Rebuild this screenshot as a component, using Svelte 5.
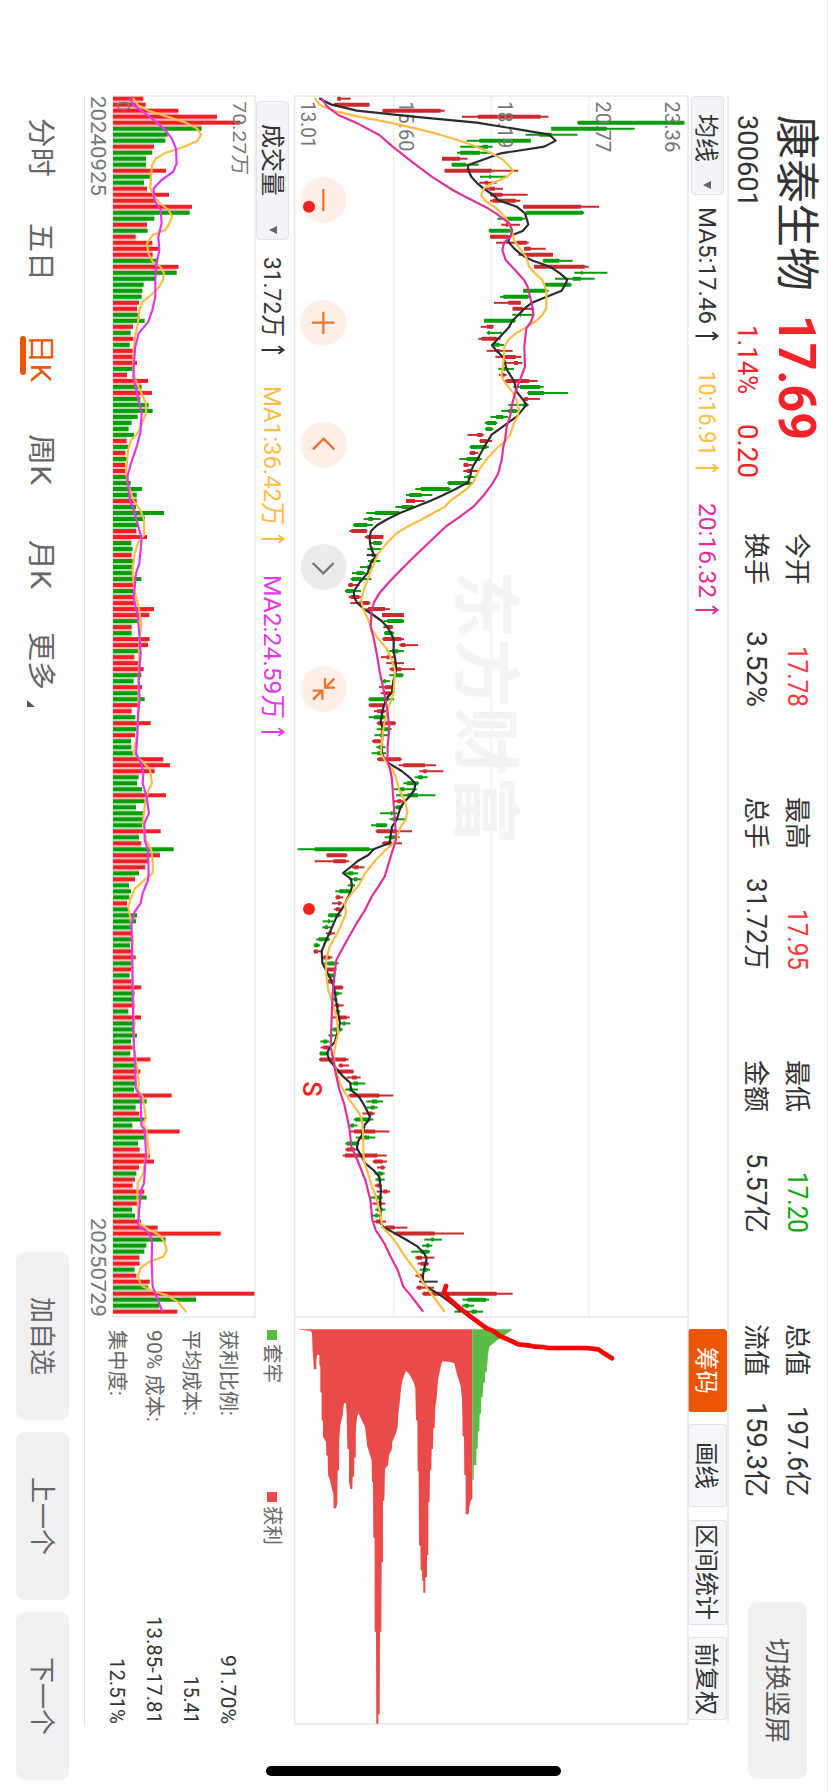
<script>
  // everything in the charts is drawn in thirds of a pixel, one day = STEP
  const FIRST = 56;
  const STEP = 18.015;

  // colour, low, body low, body high, high
  const candles = `
r142,142,153,182 r133,133,238,238 r278,278,452,464 r516,564,752,775 g862,864,1183,1183 g784,784,950,1034 g707,748,785,863 g530,568,722,722
g511,578,594,608 g501,510,570,600 r456,456,510,533 g484,486,528,566 r464,464,605,685 g570,597,602,650 r568,584,594,620 r580,598,615,639
r600,604,637,713 r600,608,677,691 r700,700,873,927 g708,708,878,882 g622,648,697,705 r634,648,655,690 g596,598,660,664 r600,600,655,660
r618,680,710,716 r702,702,722,767 r685,700,789,789 g758,760,808,848 r732,732,884,896 g853,873,877,952 g795,848,873,914 g763,763,842,845
g699,700,765,776 g630,640,715,718 r612,655,692,692 r668,668,698,732 g667,690,694,733 g582,582,675,677 r572,590,610,610 g590,594,600,636
r565,575,620,632 g605,609,628,642 r590,620,630,668 r616,640,677,694 r640,672,684,697 g625,640,646,672 r627,634,644,650 r640,648,718,743
g670,690,750,761 g712,714,762,834 r700,704,714,750 g655,700,712,716 g634,655,680,686 g601,618,640,655 g584,590,618,622 g585,588,606,610
r533,562,577,581 r568,570,590,606 g539,542,590,596 r538,540,556,565 g508,530,570,575 r521,521,535,548 r520,530,545,567 g522,532,540,555
g472,475,540,546 g376,392,478,482 g348,358,395,427 r348,348,375,404 g316,335,370,378 g229,255,328,330 g221,235,248,272 g189,192,232,248
r178,184,230,232 r224,230,280,280 g240,250,274,277 g232,244,250,274 k230,245,249,263 g234,242,252,271 g210,232,246,250 g186,200,222,227
g182,186,214,244 r174,176,188,208 g165,168,190,213 r176,182,208,214 r181,208,238,241 r230,234,285,300 r276,276,342,342 g281,292,340,342
r280,292,308,308 g282,284,308,312 r277,280,334,342 r328,332,346,384 g290,306,326,342 r273,290,298,311 r289,306,318,342 r298,304,334,375
g298,312,338,341 g276,280,288,300 r267,284,306,308 r272,284,302,306 g235,238,296,312 r236,238,280,285 r252,262,284,288 g236,252,284,288
r260,264,316,318 g260,276,296,305 g253,270,280,294 r246,250,272,274 g259,266,278,286 g245,262,275,288 r261,264,332,335 r326,340,405,438
r388,400,410,460 g374,385,398,413 g340,350,384,387 g312,330,344,380 g318,352,384,436 r309,322,334,344 g312,318,332,338 g270,302,308,322
g299,308,318,345 g243,258,290,292 r257,260,320,366 g284,298,314,329 r276,280,306,336 g23,74,238,250 r110,110,170,172 r74,130,168,178
r186,192,206,223 g165,175,190,204 g178,192,202,214 g173,182,190,195 g136,148,180,184 r136,138,150,160 r126,144,152,157 r132,138,150,158
g114,116,148,154 g98,114,120,130 g97,104,114,125 r108,116,125,135 g79,86,116,120 g71,73,85,90 r70,72,84,98 r96,100,120,127
g100,112,134,146 r108,110,138,140 g110,114,132,136 r108,114,130,136 r130,134,158,160 g132,138,146,156 g126,132,138,142 r130,138,148,161
g134,138,146,151 r128,150,170,179 g150,158,166,181 g122,130,154,158 g115,122,128,142 g91,100,112,118 r92,100,116,122 g88,90,108,118
r87,90,168,176 r145,148,158,177 r138,142,190,191 r170,186,200,212 g177,190,204,226 g166,178,188,204 r175,180,268,310 g229,246,262,279
g230,242,254,263 r217,236,248,254 g191,196,240,250 g175,182,192,202 r182,192,256,298 g198,214,238,256 g166,170,204,208 r166,170,194,203
r158,165,262,290 r248,252,278,291 r261,272,282,286 g254,262,278,284 g256,262,272,284 r254,260,270,275 r260,280,292,300 g238,258,270,278
r247,260,276,286 g256,262,278,286 g246,256,264,276 r252,258,272,288 r280,286,314,352 r310,316,434,522 g403,424,432,456 g396,408,418,427
g364,392,416,420 r376,380,396,433 r383,392,414,417 g389,400,412,420 r376,384,396,402 k387,397,400,443 r379,382,394,432 r396,400,620,668
g517,532,588,597 g516,524,536,552 g493,545,560,579`
    .trim().split(/\s+/).map((s, i) => {
      const [low, open, close, high] = s.slice(1).split(',').map(Number);
      return { c: s[0], x: FIRST + i * STEP, low, open, close, high };
    });

  const volumes = `
r432 r439 r537 r653 r723 g607 g505 g498 r464 g459 g440 g440 r500 g457 g434 r443 r509 r470 r578 g571 g465 r443 g445 r409 r459
r478 r460 g475 r537 g532 g467 g433 g429 g427 r419 r413 g418 g436 r401 g394 r402 g391 r407 r403 r413 g403 r383 r446 g427 r458
g423 g448 g460 g415 g397 g388 g404 r382 g388 r378 g384 r378 r379 g387 g394 g428 g412 r412 g410 g494 g437 g415 r411 r443 g396
g400 r397 g405 g402 g402 g426 r410 g404 r404 r404 r464 r450 g414 r397 g397 r451 r446 g416 r405 r423 r433 g426 g403 r428 g416
g436 r422 r397 g408 r454 g416 r407 g395 g396 g402 r492 r512 r466 g418 g413 g428 r500 g436 g410 g434 g434 g428 r484 g419 r426
g523 r482 r447 r438 g419 r407 g389 g395 g390 r383 g388 g413 g410 g396 r396 g395 g392 r401 r409 g400 r399 g391 r397 r426 g406
g400 r406 g387 r425 g408 g401 g413 g395 r400 g393 r453 g406 r423 r408 g412 g404 r517 g442 g409 r420 g438 g399 r541 g442 g416
r421 r452 r464 r419 g411 r407 r400 r435 g442 r416 g398 g407 r425 r475 r664 g499 g441 g435 r420 r421 g406 r411 r451 g447 r765
g590 g480 r534`
    .trim().split(/\s+/).map((s, i) => ({ c: s[0], x: FIRST + i * STEP, v: s.slice(1) - 341 }));

  const ma5 = '56,90 74,125 92,200 110,370 128,560 146,672 164,778 182,797 200,763 220,633 238,583 256,533 274,536 292,545 310,562 328,584 345,610 361,625 380,680 400,705 433,715 453,698 468,660 485,655 505,672 523,693 541,725 560,780 580,810 599,832 615,825 632,815 650,770 668,726 686,703 704,686 722,667 742,657 760,640 796,606 815,622 832,640 868,650 905,673 935,680 974,710 992,695 1010,680 1028,655 1046,630 1064,605 1100,583 1136,563 1154,552 1172,543 1190,541 1208,533 1227,497 1245,460 1263,420 1281,375 1299,330 1317,293 1335,262 1353,243 1371,239 1389,240 1407,244 1431,255 1450,242 1479,233 1506,210 1533,192 1551,192 1569,202 1587,222 1605,250 1623,275 1641,292 1660,303 1677,311 1713,311 1740,316 1767,319 1803,310 1837,306 1857,288 1890,278 1925,272 1945,278 1990,276 2020,276 2038,284 2050,297 2073,335 2095,362 2112,376 2130,373 2148,360 2166,343 2181,332 2220,320 2240,306 2289,299 2307,252 2325,235 2343,203 2361,182 2379,159 2397,183 2420,186 2440,180 2480,160 2510,140 2540,127 2577,110 2613,95 2649,97 2670,108 2703,125 2721,132 2760,138 2830,150 2860,142 2885,135 2902,120 2920,111 2940,118 2973,145 2990,160 3009,181 3030,183 3050,207 3080,225 3110,240 3120,236 3135,224 3165,216 3185,204 3205,201 3225,212 3250,226 3270,250 3290,268 3330,273 3370,270 3400,272 3430,272 3441,280 3460,315 3480,350 3500,383 3520,402 3535,410 3565,403 3585,399 3605,399 3620,408 3640,443 3655,465 3675,490 3693,510';
  const ma10 = '56,75 75,90 92,130 110,205 128,300 146,380 164,450 182,510 200,560 220,605 238,637 256,656 272,669 290,652 308,610 325,582 345,573 363,587 382,615 400,635 420,652 450,665 480,672 500,685 530,708 545,713 560,717 580,735 600,757 630,769 685,769 705,757 720,742 740,713 760,677 780,655 800,643 830,642 865,638 885,634 905,643 935,667 960,680 990,687 1010,682 1030,672 1060,662 1082,647 1110,615 1140,588 1170,567 1210,548 1227,530 1245,505 1263,480 1280,465 1299,430 1320,392 1340,352 1360,320 1390,290 1420,265 1450,252 1485,238 1530,222 1560,213 1590,221 1620,235 1650,246 1675,264 1710,293 1740,305 1770,315 1840,311 1870,300 1890,293 1930,283 1970,277 2020,273 2040,284 2070,308 2090,317 2130,328 2150,338 2170,347 2195,352 2220,347 2240,332 2270,322 2295,305 2307,290 2340,257 2380,225 2415,207 2440,185 2470,164 2500,168 2520,160 2560,142 2580,130 2600,119 2640,108 2680,108 2730,115 2760,124 2810,140 2860,145 2890,137 2930,131 2960,135 2980,140 3015,152 3050,172 3080,193 3100,208 3120,215 3150,219 3240,221 3280,234 3320,246 3350,258 3400,271 3440,276 3465,300 3490,320 3530,345 3560,368 3585,387 3605,398 3630,415 3660,438 3693,462';
  const ma20 = '56,95 80,112 105,145 128,198 165,268 200,308 250,372 290,425 330,488 355,535 380,585 400,618 430,658 450,666 470,662 488,642 510,637 540,647 570,675 600,702 620,713 650,720 680,727 705,730 725,723 745,709 800,703 860,705 900,690 930,678 970,667 1010,660 1040,650 1080,645 1100,640 1140,635 1180,625 1210,608 1245,582 1280,550 1310,510 1340,467 1380,425 1420,383 1460,342 1500,303 1540,268 1565,253 1590,245 1640,242 1670,250 1720,260 1780,270 1840,283 1890,292 1940,298 2000,293 2040,292 2080,303 2100,306 2160,310 2220,315 2280,318 2320,305 2350,296 2390,284 2420,265 2450,245 2490,225 2530,200 2570,177 2610,155 2640,139 2680,134 2740,128 2840,124 2900,122 2940,130 2980,137 3025,147 3070,162 3120,173 3150,179 3200,184 3240,202 3300,226 3360,241 3420,247 3450,257 3490,283 3530,302 3570,323 3620,340 3650,365 3693,398';

  const vma1 = '56,402 75,415 92,448 110,505 128,560 146,593 164,605 182,595 200,555 218,500 235,470 256,458 290,455 325,453 345,463 370,482 390,508 410,518 430,510 450,498 465,460 490,443 520,447 545,460 560,483 580,494 600,491 625,476 645,455 665,430 690,420 730,416 770,407 820,402 870,402 900,408 930,422 970,440 1000,440 1030,428 1060,415 1080,395 1110,386 1180,380 1220,388 1260,402 1295,425 1320,434 1365,434 1385,418 1420,406 1470,399 1530,405 1580,418 1630,426 1680,420 1800,418 1900,418 1970,412 2020,402 2045,430 2070,452 2110,458 2135,445 2180,436 2230,431 2280,440 2310,456 2350,461 2380,460 2400,435 2425,407 2458,393 2480,387 2520,394 2580,401 2650,398 2750,402 2850,404 2900,403 2960,413 3010,418 3030,415 3050,430 3115,440 3130,432 3155,442 3190,445 3220,449 3240,437 3280,432 3310,415 3350,414 3400,417 3430,420 3450,450 3465,480 3485,495 3510,502 3530,492 3545,450 3565,423 3590,416 3615,425 3630,450 3645,500 3665,535 3695,560';
  const vma2 = '56,392 75,402 95,430 125,470 150,497 175,517 205,530 250,532 275,522 300,487 325,463 360,465 390,484 430,487 470,477 510,480 560,470 600,468 650,468 690,459 725,447 760,418 800,408 850,404 890,402 940,413 1000,427 1060,423 1100,412 1150,395 1190,384 1230,388 1260,392 1295,405 1350,420 1375,427 1450,420 1480,410 1550,403 1575,408 1610,416 1720,424 1800,418 1860,421 1900,416 1970,414 2020,410 2050,425 2080,432 2110,430 2150,442 2200,449 2230,435 2280,436 2310,446 2380,448 2400,446 2440,430 2470,424 2495,406 2530,396 2650,399 2750,400 2880,403 2960,408 3025,409 3050,424 3135,426 3150,436 3220,440 3310,434 3330,425 3430,416 3440,420 3460,450 3485,458 3550,457 3620,460 3640,468 3692,488';

  // chip distribution: price level, length
  const chipsIn = '20,88 62,93 66,100 68,155 72,208 79,208 79,180 82,165 88,165 88,195 91,200 91,275 95,280 95,360 99,362 99,410 108,425 109,465 113,468 114,525 120,540 125,565 130,582 131,625 138,625 142,610 143,512 147,510 148,415 151,375 157,350 162,310 168,310 170,345 172,445 177,450 177,545 181,567 187,567 188,530 192,530 193,473 197,473 198,378 202,348 206,340 215,360 225,380 232,440 240,465 245,480 246,545 249,545 250,712 254,714 254,995 258,995 259,1271 265,1271 265,1243 269,1243 270,995 274,995 275,787 279,787 279,602 283,602 285,507 294,495 297,465 305,450 307,425 318,400 323,380 325,345 330,300 333,265 338,238 348,213 358,222 370,245 376,265 378,360 382,362 383,512 386,515 387,735 391,737 392,810 396,812 397,842 400,842 400,878 406,878 406,832 411,832 411,765 415,765 415,606 419,605 420,511 424,511 425,447 429,447 430,385 434,383 436,320 440,295 444,240 452,200 457,184 480,186 493,190 500,220 512,258 516,295 518,408 522,410 523,525 527,525 527,643 536,643 538,620 543,600 547,597 547,88';
  const chipsOut = '547,88 668,88 640,108 622,120 598,140 594,165 590,215 585,218 585,245 580,250 578,290 574,292 573,340 569,342 568,393 564,395 563,445 559,447 559,495 552,495 551,540 547,540';
  const pen = '468,618 463,635 475,655 510,685 545,712 590,745 608,752 630,768 660,781 685,793 715,796 735,800 760,801 775,804 890,804 925,808 942,820 966,835';

  const quotes = [
    ['今开', '17.78', 61, 'up', '换手', '3.52%', 76],
    ['最高', '17.95', 61, 'up', '总手', '31.72万', 92],
    ['最低', '17.20', 61, 'down', '金额', '5.57亿', 80],
    ['总值', '197.6亿', 91, '', '流值', '159.3亿', 95],
  ];
  const averages = [
    ['MA5:17.46', 117, 'dark'],
    ['10:16.91', 85, 'amber'],
    ['20:16.32', 95, 'pink'],
  ];
  const volAverages = [
    ['31.72万', 80, 'dark'],
    ['MA1:36.42万', 140, 'amber'],
    ['MA2:24.59万', 144, 'violet'],
  ];
  const tools = [
    ['筹码', 47, 'on'],
    ['画线', 47, ''],
    ['区间统计', 96, 'long'],
    ['前复权', 72, ''],
  ];
  const levels = [
    ['23.36', 48, 51],
    ['20.77', 256, 51],
    ['18.19', 549, 47],
    ['15.60', 846, 50],
    ['13.01', 1140, 47],
  ];
  const costs = [
    ['获利比例:', 86, '91.70%', 69],
    ['平均成本:', 86, '15.41', 48],
    ['90% 成本:', 92, '13.85-17.81', 108],
    ['集中度:', 66, '12.51%', 66],
  ];
  const tabs = [
    ['分时', 59],
    ['五日', 58],
    ['日K', 48],
    ['周K', 51],
    ['月K', 49],
    ['更多', 58],
  ];
</script>

{#snippet label(text, w, size, cls = '')}
  <svg class="label {cls}" width={w} height={size}>
    <text x="0" y={size * 0.86} font-size={size} textLength={w} lengthAdjust="spacingAndGlyphs">{text}</text>
  </svg>
{/snippet}

{#snippet arrow(cls)}
  <svg class="arrow {cls}" width="10" height="24" viewBox="0 0 10 24">
    <path d="M5 23.5V1.5M1.3 6.5L5 1.5L8.7 6.5" />
  </svg>
{/snippet}

{#snippet caret()}
  <svg class="caret" width="8" height="8" viewBox="0 0 8 8"><path d="M0 0H8L4 8Z" /></svg>
{/snippet}

<div class="phone">
  <div class="stage">
    <header>
      <div class="stock">
        <div class="line1">
          {@render label('康泰生物', 176, 44)}
          {@render label('17.69', 125, 52, 'price up')}
        </div>
        <div class="line2">
          {@render label('300601', 92, 27)}
          {@render label('1.14%', 69, 27, 'up pct')}
          {@render label('0.20', 54, 27, 'up diff')}
        </div>
      </div>
      {#each quotes as [a, av, aw, cls, b, bv, bw]}
        <div class="quote">
          <div>{@render label(a, 52, 26)}{@render label(av, aw, 27, cls)}</div>
          <div>{@render label(b, 52, 26)}{@render label(bv, bw, 27)}</div>
        </div>
      {/each}
      <button class="switch">{@render label('切换竖屏', 105, 26)}</button>
    </header>

    <div class="toolbar">
      <div class="pill">{@render label('均线', 48, 24)}{@render caret()}</div>
      <div class="avgs">
        {#each averages as [text, w, cls]}
          {@render label(text, w, 24.5, cls)}{@render arrow(cls)}
        {/each}
      </div>
      <div class="tools">
        {#each tools as [text, w, cls]}
          <button class={cls}>{@render label(text, w, 24)}</button>
        {/each}
      </div>
    </div>

    <svg class="kline" width="1628" height="394" viewBox="48 0 4884 1182">
      <g class="grid">
        <path d="M48 297H3711M48 590H3711M48 883H3711" />
        <path class="frame" d="M48 0H4932V1180H48ZM3711 0V1180" />
      </g>
      <text class="mark" x="1470" y="680" font-size="206" textLength="824" lengthAdjust="spacingAndGlyphs">东方财富</text>

      <g transform="translate(0 1194) scale(1 -1)">
        {#each candles as d}
          <line class="wick {d.c}" x1={d.x} x2={d.x} y1={d.low} y2={d.high} />
          <rect class="body {d.c}" x={d.x - 6} width="12" y={d.open} height={d.close - d.open} rx="1.5" />
        {/each}
      </g>

      {#each levels as [text, y, w]}
        <text class="axis" x="64" y={y + 21} font-size="59" textLength={w * 3} lengthAdjust="spacingAndGlyphs">{text}</text>
      {/each}

      <g transform="translate(0 1194) scale(1 -1)">
        <polyline class="ma dark" points={ma5} />
        <polyline class="ma amber" points={ma10} />
        <polyline class="ma pink" points={ma20} />
        <g transform="matrix(0 1 1 0 3660 0)">
          <polygon class="chips-in" points={chipsIn} />
          <polygon class="chips-out" points={chipsOut} />
        </g>
        <polyline class="pen" points={pen} transform="matrix(0 1 1 0 3000 0)" />
      </g>

      <g class="icons">
        <circle cx="360" cy="1094" r="69" />
        <path d="M327 1094H394" />
        <circle cx="728" cy="1094" r="69" />
        <path d="M695 1094H762M728 1061V1128" />
        <circle cx="1094" cy="1093" r="69" />
        <path d="M1108 1061L1076 1093L1108 1125" />
        <g class="off">
          <circle cx="1461" cy="1093" r="69" />
          <path d="M1449 1063L1480 1094L1449 1126" />
        </g>
        <circle cx="1827" cy="1093" r="69" />
        <path d="M1796 1061L1823 1088M1795 1089H1823V1059M1859 1125L1832 1098M1832 1126V1097H1859" />
      </g>
      <g class="events">
        <circle cx="380" cy="1137" r="18" />
        <circle cx="2487" cy="1137" r="18" />
        <text x="3004" y="1156" font-size="76">S</text>
      </g>
    </svg>

    <div class="lower">
      <div class="left">
        <div class="volbar">
          <div class="pill">{@render label('成交量', 72, 24)}{@render caret()}</div>
          <div class="avgs">
            {#each volAverages as [text, w, cls]}
              {@render label(text, w, 24.5, cls)}{@render arrow(cls)}
            {/each}
          </div>
        </div>
        <svg class="volume" width="1221" height="142" viewBox="48 0 3663 426">
          <path class="frame" d="M48 0H3711V426H48Z" />
          <g transform="translate(0 426) scale(1 -1)">
            {#each volumes as d, i}
              {#if i + 1 < volumes.length}
                <rect class="gap {d.c}" x={d.x + 6} width="6" y="0" height={Math.min(d.v, volumes[i + 1].v)} />
              {/if}
              <rect class="bar {d.c}" x={d.x - 6} width="12" y="0" height={d.v} />
            {/each}
          </g>
          <text class="axis" x="64" y="66" font-size="57" textLength="222" lengthAdjust="spacingAndGlyphs">70.27万</text>
          <text class="axis" x="62" y="414" font-size="57">0</text>
          <g transform="translate(0 767) scale(1 -1)">
            <polyline class="ma amber" points={vma1} />
            <polyline class="ma violet" points={vma2} />
          </g>
        </svg>
        <div class="dates">
          {@render label('20240925', 100, 20.5)}
          {@render label('20250729', 99, 20.5)}
        </div>
      </div>
      <div class="chips">
        <div class="legend">
          <i class="g"></i>{@render label('套牢', 39, 20)}
          <i class="r"></i>{@render label('获利', 39, 20)}
        </div>
        {#each costs as [name, w, value, vw]}
          <div class="cost">{@render label(name, w, 20)}{@render label(value, vw, 21, 'dark')}</div>
        {/each}
      </div>
    </div>

    <footer>
      <nav>
        {#each tabs as [text, w]}
          <span class:active={text === '日K'}>{@render label(text, w, 28)}</span>
        {/each}
        <svg class="more" width="7" height="8" viewBox="0 0 7 8"><path d="M7 0V8H0Z" /></svg>
      </nav>
      <div class="actions">
        <button>{@render label('加自选', 78, 26)}</button>
        <button>{@render label('上一个', 78, 26)}</button>
        <button>{@render label('下一个', 78, 26)}</button>
      </div>
    </footer>
    <div class="home"></div>
  </div>
</div>

<style>
  :global(body) {
    background: #fefefe;
  }
  .phone {
    width: 828px;
    height: 1792px;
    overflow: hidden;
  }
  /* landscape screen held upright */
  .stage {
    position: relative;
    width: 1792px;
    height: 828px;
    box-sizing: border-box;
    display: flex;
    flex-direction: column;
    background: #fefefe;
    box-shadow: inset 0 1px #f0f0f3;
    color: #333;
    font-family: Roboto, "Noto Sans CJK SC", sans-serif;
    font-weight: 400;
    transform-origin: 0 0;
    transform: translateX(828px) rotate(90deg);
  }
  svg {
    display: block;
    flex: none;
    overflow: visible;
  }
  .label {
    fill: currentColor;
  }
  .label text {
    font-weight: 400;
  }
  .label.price {
    margin-top: -3px;
  }
  .label.price text {
    font-weight: 700;
  }
  button {
    border: 0;
    padding: 0;
    font: inherit;
    color: inherit;
    display: flex;
    align-items: center;
    justify-content: center;
  }
  .up { color: #f5222a; }
  .down { color: #10a810; }
  .dark { color: #333; }
  .amber { color: #fdbc45; }
  .pink { color: #df2f9b; }
  .violet { color: #e038e8; }

  header {
    height: 99px;
    display: flex;
    box-sizing: border-box;
    padding-left: 115px;
  }
  .stock {
    width: 418px;
  }
  .line1 {
    height: 52px;
    margin-top: 5px;
    display: flex;
    align-items: center;
    gap: 24px;
  }
  .line2 {
    height: 27px;
    margin-top: 10px;
    display: flex;
    align-items: center;
  }
  .pct { margin-left: 118px; }
  .diff { margin-left: 30px; }
  .quote {
    width: 174px;
    height: 82px;
    margin: 10px 90px 0 0;
  }
  .quote + .quote {
    width: 173px;
  }
  .quote:nth-child(4) {
    width: 173px;
    margin-right: 91px;
  }
  .quote:nth-child(5) {
    margin-right: 105px;
  }
  .quote div {
    height: 41px;
    display: flex;
    align-items: center;
    justify-content: space-between;
  }
  .quote .label.up { color: #f83a3f; }
  .switch {
    width: 177px;
    height: 59px;
    margin-top: 21px;
    border-radius: 9px;
    background: #f1f1f3;
    color: #555;
  }

  .toolbar {
    height: 39px;
    margin: 0 68px 0 96px;
    border-top: 2px solid #f0f0f3;
    display: flex;
    align-items: center;
  }
  .pill {
    box-sizing: border-box;
    display: flex;
    align-items: center;
    background: #f4f5f8;
    border: 1px solid #e3e4e8;
    border-radius: 4px;
  }
  .toolbar .pill {
    width: 99px;
    height: 33px;
    padding-left: 17px;
    gap: 19px;
  }
  .caret { fill: #666; }
  .avgs {
    display: flex;
    align-items: center;
    margin-left: 12px;
    gap: 7px;
  }
  .avgs .arrow + .label {
    margin-left: 23px;
  }
  .arrow path {
    fill: none;
    stroke: currentColor;
    stroke-width: 1.9;
  }
  .tools {
    margin-left: auto;
    margin-right: 4px;
    display: flex;
    gap: 12.5px;
  }
  .tools button {
    box-sizing: border-box;
    width: 83px;
    height: 39px;
    border: 1px solid #e0e2e7;
    border-radius: 3px;
    background: #f6f7fa;
  }
  .tools .long { width: 105px; }
  .tools .on {
    background: #eb5503;
    border-color: #eb5503;
    color: #fff;
  }

  .kline {
    margin-left: 96px;
  }
  .grid path, .frame {
    fill: none;
    stroke: #eff0f4;
    stroke-width: 4;
  }
  .grid .frame, .frame {
    stroke: #e6e7eb;
  }
  .mark {
    fill: #f4f4f4;
    font-weight: 700;
  }
  .wick { stroke-width: 6; }
  .wick.r { stroke: #cb2a2e; }
  .wick.g { stroke: #069c0a; }
  .wick.k { stroke: #333; }
  .body.r { fill: #cb2a2e; }
  .body.g { fill: #069c0a; }
  .body.k { fill: #333; }
  .bar.r, .gap.r { fill: #ef2024; }
  .bar.g, .gap.g { fill: #069c06; }
  .gap { opacity: 0.32; }
  .axis { fill: #777; }
  .ma {
    fill: none;
    stroke: currentColor;
    stroke-width: 6.5;
    stroke-linejoin: round;
    stroke-linecap: round;
  }
  .ma.dark { color: #2b2b2b; }
  .chips-in { fill: #e94a4a; }
  .chips-out { fill: #5cbb46; }
  .pen {
    fill: none;
    stroke: #fe0000;
    stroke-width: 14;
    stroke-linejoin: round;
    stroke-linecap: round;
  }
  .icons circle { fill: #fef0e9; }
  .icons path {
    fill: none;
    stroke: #ee7431;
    stroke-width: 7;
  }
  .icons .off circle { fill: #ebebeb; }
  .icons .off path { stroke: #777; }
  .events {
    fill: #f52121;
    font-weight: 500;
  }

  .lower {
    height: 209px;
    margin-left: 96px;
    display: flex;
  }
  .left {
    width: 1221px;
  }
  .volbar {
    height: 39px;
    padding-left: 5px;
    display: flex;
    align-items: center;
  }
  .volbar .pill {
    width: 139px;
    height: 33px;
    padding-left: 22px;
    gap: 30px;
    margin-top: 3px;
  }
  .volbar .avgs {
    margin-left: 17px;
    margin-top: 3px;
    gap: 8px;
  }
  .dates {
    height: 28px;
    display: flex;
    justify-content: space-between;
    align-items: center;
    color: #777;
  }
  .chips {
    width: 394px;
    margin-left: 13px;
    color: #666;
  }
  .legend {
    display: flex;
    align-items: center;
    height: 44px;
    margin-bottom: 3px;
  }
  .legend i {
    width: 10px;
    height: 10px;
    margin-right: 4px;
  }
  .legend .g { background: #5cbb46; }
  .legend .r { background: #e94a4a; margin-left: 109px; }
  .cost {
    height: 37px;
    display: flex;
    align-items: center;
    justify-content: space-between;
  }

  footer {
    flex: 1;
    display: flex;
    position: relative;
    justify-content: space-between;
    padding: 16px 12px 0 118px;
    color: #666;
    background: linear-gradient(#dfe0e4, #dfe0e4) 96px 0 / 1629px 1px no-repeat;
  }
  nav {
    display: flex;
    height: 56px;
    align-items: center;
  }
  nav span {
    margin-right: 46px;
  }
  nav span:nth-child(2) { margin-right: 53px; }
  nav span:nth-child(3) { margin-right: 52px; }
  nav span:nth-child(4) { margin-right: 55px; }
  nav span:nth-child(5) { margin-right: 43px; }
  nav span:nth-child(6) { margin-right: 10px; }
  nav .active {
    color: #eb5503;
    position: relative;
  }
  .active::after {
    content: '';
    position: absolute;
    left: 2px;
    bottom: -7px;
    width: 39px;
    height: 6px;
    border-radius: 3px;
    background: #eb5503;
  }
  .more {
    margin-top: 20px;
    fill: #555;
  }
  .actions {
    display: flex;
    gap: 12px;
  }
  .actions button {
    width: 168px;
    height: 53px;
    border-radius: 9px;
    background: #f1f1f3;
  }
  .home {
    position: absolute;
    left: 1766px;
    top: 267px;
    width: 10px;
    height: 295px;
    border-radius: 5px;
    background: #000;
  }
</style>
